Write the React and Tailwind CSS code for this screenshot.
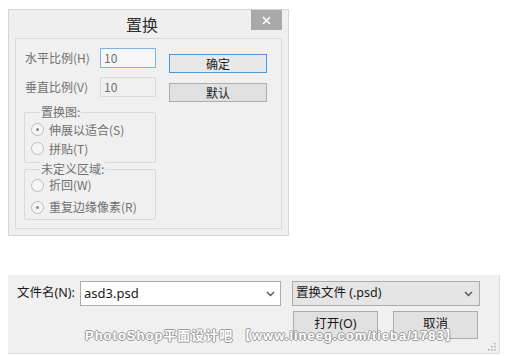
import React from "react";

const cjk = { fontFamily: '"Noto Sans CJK SC", "Noto Sans", sans-serif' };

function Radio({ checked, label }) {
  return (
    <div className="flex items-center">
      <span className="flex h-[13px] w-[13px] items-center justify-center rounded-full border border-[#bcbcbc] bg-[#f6f6f6]">
        {checked && <span className="h-[3px] w-[3px] rounded-full bg-[#8a8a8a]" />}
      </span>
      <span className="ml-[5px] text-[12px] leading-none text-[#6f6f6f]">{label}</span>
    </div>
  );
}

function Chevron() {
  return (
    <svg width="9" height="6" viewBox="0 0 9 6" className="shrink-0">
      <polyline points="1,1 4.5,4.5 8,1" fill="none" stroke="#555" strokeWidth="1.4" />
    </svg>
  );
}

export default function App() {
  return (
    <div className="relative h-[356px] w-[508px] overflow-hidden bg-white" style={cjk}>
      {/* Dialog 置换 */}
      <div className="ml-[8px] mt-[9px] flex h-[227px] w-[281px] flex-col border border-[#d6d6d6] bg-[#efefef]">
        <div className="flex h-[28px] shrink-0 items-start">
          <div className="flex h-[28px] flex-1 items-center justify-center pl-[24px] text-[16px] text-[#2f2f2f]">置换</div>
          <div className="mr-[6px] flex h-[20px] w-[31px] items-center justify-center bg-[#a9a9a9]">
            <svg width="9" height="9" viewBox="0 0 9 9">
              <path d="M1 1 L8 8 M8 1 L1 8" stroke="#fff" strokeWidth="1.6" />
            </svg>
          </div>
        </div>
        <div className="mx-[6px] mb-[6px] flex flex-1 border border-[#dadada] bg-[#f0f0f0] pl-[8px] pt-[9px]">
          <div className="flex w-[132px] flex-col">
            <div className="flex h-[20px] items-center">
              <span className="w-[76px] pl-[1px] text-[12px] text-[#707070]">水平比例(H)</span>
              <div className="flex h-[20px] w-[56px] items-center border border-[#7db3e8] bg-[#f7f7f7] pl-[3px] text-[12px] text-[#6f6f6f]">10</div>
            </div>
            <div className="mt-[9px] flex h-[20px] items-center">
              <span className="w-[76px] pl-[1px] text-[12px] text-[#707070]">垂直比例(V)</span>
              <div className="flex h-[20px] w-[56px] items-center border border-[#d9d9d9] bg-[#f0f0f0] pl-[3px] text-[12px] text-[#6f6f6f]">10</div>
            </div>
            <div className="relative mt-[15px] h-[51px] rounded-[2px] border border-[#d9d9d9] pl-[6px] pt-[7px]">
              <span className="absolute -top-[9px] left-[15px] bg-[#f0f0f0] px-[1px] text-[12px] leading-[16px] text-[#707070]">置换图:</span>
              <div className="flex h-[19px] items-center"><Radio checked label="伸展以适合(S)" /></div>
              <div className="flex h-[19px] items-center"><Radio label="拼贴(T)" /></div>
            </div>
            <div className="relative mt-[6px] h-[51px] rounded-[2px] border border-[#d9d9d9] pl-[6px] pt-[4px]">
              <span className="absolute -top-[9px] left-[15px] bg-[#f0f0f0] px-[1px] text-[12px] leading-[16px] text-[#707070]">未定义区域:</span>
              <div className="flex h-[22px] items-center"><Radio label="折回(W)" /></div>
              <div className="flex h-[22px] items-center"><Radio checked label="重复边缘像素(R)" /></div>
            </div>
          </div>
          <div className="ml-[13px] flex flex-col pt-[6px]">
            <div className="flex h-[19px] w-[98px] items-center justify-center border border-[#4d96dd] bg-[#e8e8e8] text-[12px] text-[#1c1c1c]">确定</div>
            <div className="mt-[10px] flex h-[19px] w-[98px] items-center justify-center border border-[#adadad] bg-[#e1e1e1] text-[12px] text-[#1c1c1c]">默认</div>
          </div>
        </div>
      </div>

      {/* File open panel */}
      <div className="relative ml-[8px] mt-[39px] h-[79px] w-[492px] border-b border-r border-[#dedede] bg-[#f0f0f0] pt-[6px]" style={{ fontFamily: '"Noto Sans", "Noto Sans CJK SC", sans-serif' }}>
        <div className="flex items-center pl-[9px]">
          <span className="w-[63px] text-[12.5px] text-[#1a1a1a]">文件名(N):</span>
          <div className="flex h-[25px] w-[201px] items-center justify-between border border-[#acacac] bg-white pl-[3px] pr-[5px] text-[13px] text-[#1a1a1a]">
            <span>asd3.psd</span>
            <Chevron />
          </div>
          <div className="ml-[11px] flex h-[25px] w-[188px] items-center justify-between border border-[#acacac] bg-[#e5e5e5] pl-[3px] pr-[6px] text-[12.5px] text-[#1a1a1a]">
            <span>置换文件 (.psd)</span>
            <Chevron />
          </div>
        </div>
        <div className="mt-[5px] flex pl-[285px]">
          <div className="flex h-[28px] w-[85px] items-start justify-center border border-[#adadad] bg-[#e1e1e1] pt-[3px] text-[12.5px] text-[#1a1a1a]">打开(O)</div>
          <div className="ml-[15px] flex h-[28px] w-[85px] items-start justify-center border border-[#adadad] bg-[#e1e1e1] pt-[3px] text-[12.5px] text-[#1a1a1a]">取消</div>
        </div>
        <svg className="absolute bottom-[2px] right-[3px]" width="9" height="9" viewBox="0 0 9 9">
          <g fill="#a8a8a8">
            <rect x="7" y="1" width="1.5" height="1.5" />
            <rect x="4" y="4" width="1.5" height="1.5" />
            <rect x="7" y="4" width="1.5" height="1.5" />
            <rect x="1" y="7" width="1.5" height="1.5" />
            <rect x="4" y="7" width="1.5" height="1.5" />
            <rect x="7" y="7" width="1.5" height="1.5" />
          </g>
        </svg>
      </div>

      {/* Watermark */}
      <div
        className="absolute left-[85px] top-[328px] whitespace-nowrap text-[13px] font-bold leading-[16px] tracking-[1px] text-white [text-shadow:1px_0_0_#9a9a9a,-1px_0_0_#9a9a9a,0_1px_0_#9a9a9a,0_-1px_0_#9a9a9a]"
        style={{ fontFamily: '"Liberation Sans", "Noto Sans CJK SC", sans-serif' }}
      >
        PhotoShop平面设计吧 【www.lineeg.com/tieba/1783】
      </div>
    </div>
  );
}
